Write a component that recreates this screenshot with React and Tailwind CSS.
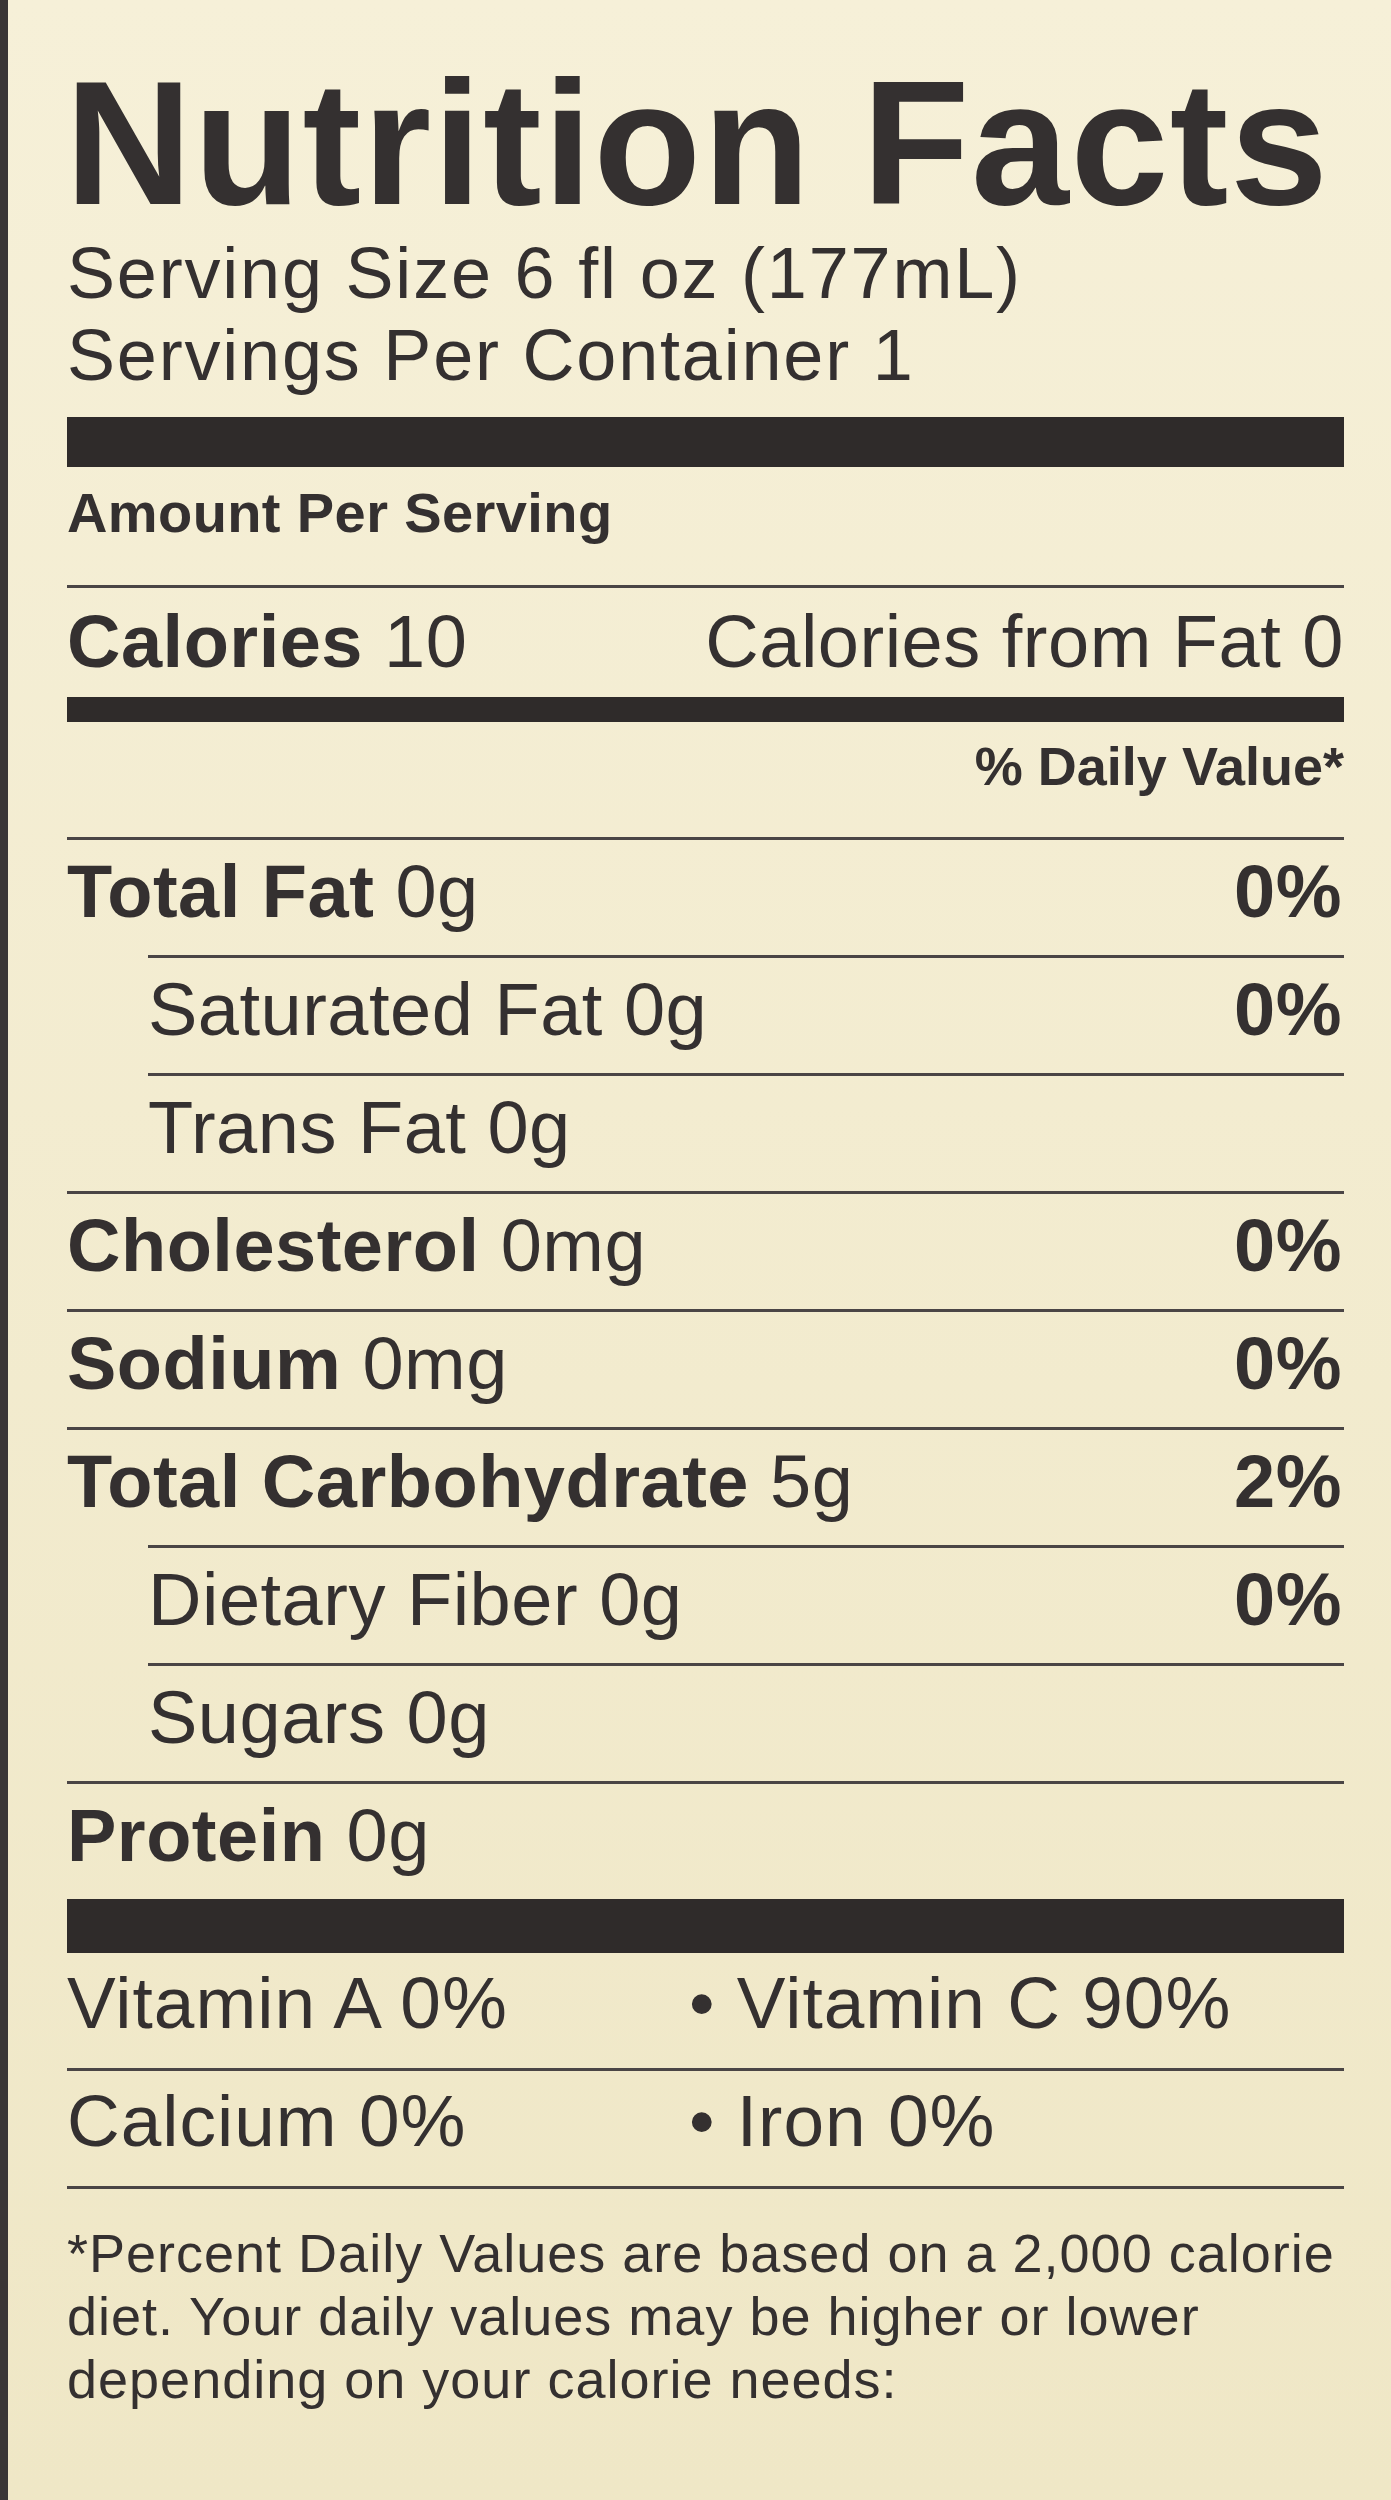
import React from "react";
import clsx from "clsx";

const nutrients = [
  { label: "Total Fat", amount: "0g", dv: "0%", bold: true },
  { label: "Saturated Fat", amount: "0g", dv: "0%", sub: true },
  { label: "Trans Fat", amount: "0g", sub: true },
  { label: "Cholesterol", amount: "0mg", dv: "0%", bold: true },
  { label: "Sodium", amount: "0mg", dv: "0%", bold: true },
  { label: "Total Carbohydrate", amount: "5g", dv: "2%", bold: true },
  { label: "Dietary Fiber", amount: "0g", dv: "0%", sub: true },
  { label: "Sugars", amount: "0g", sub: true },
  { label: "Protein", amount: "0g", bold: true },
];

const NutrientRow = ({ item }) => (
  <div
    className={clsx(
      "flex h-[118px] justify-between border-t-[3px] border-[#4a4545] text-[74px] leading-[103px] tracking-[0.5px]",
      item.sub && "ml-[81px]"
    )}
  >
    <span className="whitespace-nowrap">
      {item.bold ? <span className="font-bold">{item.label}</span> : item.label} {item.amount}
    </span>
    {item.dv && <span className="pr-[2px] font-bold">{item.dv}</span>}
  </div>
);

const App = () => {
  return (
    <div className="min-h-[2500px] border-l-8 border-[#3a3636] bg-linear-to-b from-[#f6f0d8] to-[#efe7c6] pl-[59px] pr-[47px] pt-[56px] font-['Liberation_Sans',Arial,sans-serif] text-[#343030]">
      <h1 className="-ml-[2px] whitespace-nowrap text-[176px] font-bold leading-[174px] tracking-[1.5px]">
        Nutrition Facts
      </h1>

      <div className="mt-[2px] text-[72px] leading-[82px] tracking-[1.8px]">
        <p className="whitespace-nowrap">Serving Size 6 fl oz (177mL)</p>
        <p className="whitespace-nowrap">Servings Per Container 1</p>
      </div>

      <div className="mt-[21px] h-[50px] bg-[#2f2b2a]" />

      <div className="h-[121px] border-b-[3px] border-[#4a4545] text-[56px] font-bold leading-[91px] tracking-[0.4px]">
        Amount Per Serving
      </div>

      {/* calories */}
      <div className="flex h-[107px] justify-between text-[74px] leading-[107px] tracking-[0.5px]">
        <span>
          <span className="font-bold">Calories</span> 10
        </span>
        <span>Calories from Fat 0</span>
      </div>

      <div className="mt-[2px] h-[25px] bg-[#2f2b2a]" />

      <div className="h-[115px] text-right text-[54px] font-bold leading-[89px]">% Daily Value*</div>

      {nutrients.map((item) => (
        <NutrientRow key={item.label} item={item} />
      ))}

      <div className="h-[54px] bg-[#2f2b2a]" />

      {/* vitamins & minerals */}
      <div className="grid h-[118px] grid-cols-[622px_1fr] border-b-[3px] border-[#4a4545] text-[73px] leading-[100px] tracking-[1px]">
        <span>Vitamin A 0%</span>
        <span>• Vitamin C 90%</span>
      </div>
      <div className="grid h-[118px] grid-cols-[622px_1fr] border-b-[3px] border-[#4a4545] text-[73px] leading-[100px] tracking-[1px]">
        <span>Calcium 0%</span>
        <span>• Iron 0%</span>
      </div>

      <div className="pt-[33px] text-[54px] leading-[63px] tracking-[1px]">
        <p className="whitespace-nowrap">*Percent Daily Values are based on a 2,000 calorie</p>
        <p className="whitespace-nowrap">diet. Your daily values may be higher or lower</p>
        <p className="whitespace-nowrap">depending on your calorie needs:</p>
      </div>
    </div>
  );
};

export default App;
